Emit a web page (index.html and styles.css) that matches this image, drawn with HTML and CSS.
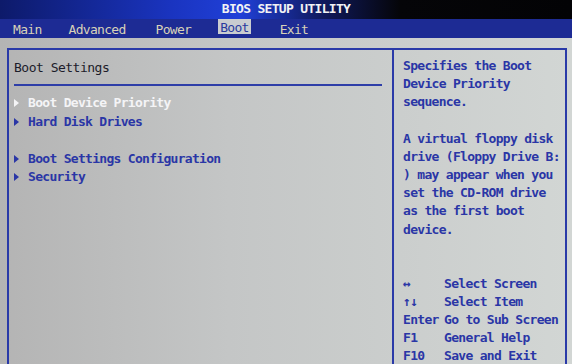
FILE: index.html
```html
<!DOCTYPE html>
<html>
<head>
<meta charset="utf-8">
<link rel="stylesheet" href="styles.css">
</head>
<body>
<div class="screen">
  <div class="titlebar">BIOS SETUP UTILITY</div>
  <nav class="menubar">
    <span class="tab tab-main">Main</span>
    <span class="tab tab-adv">Advanced</span>
    <span class="tab tab-power">Power</span>
    <span class="tab tab-boot active">Boot</span>
    <span class="tab tab-exit">Exit</span>
  </nav>
  <div class="body">
    <div class="frame">
      <section class="left">
        <div class="heading">Boot Settings</div>
        <div class="rule"></div>
        <ul class="items">
          <li class="item selected"><span class="tri"></span>Boot Device Priority</li>
          <li class="item"><span class="tri"></span>Hard Disk Drives</li>
          <li class="item spacer"></li>
          <li class="item"><span class="tri"></span>Boot Settings Configuration</li>
          <li class="item"><span class="tri"></span>Security</li>
        </ul>
      </section>
      <aside class="right">
        <div class="desc">
          <p>Specifies the Boot<br>Device Priority<br>sequence.</p>
          <p>A virtual floppy disk<br>drive (Floppy Drive B:<br>) may appear when you<br>set the CD-ROM drive<br>as the first boot<br>device.</p>
        </div>
        <div class="keys">
          <div class="krow"><span class="k">↔</span><span>Select Screen</span></div>
          <div class="krow"><span class="k">↑↓</span><span>Select Item</span></div>
          <div class="krow"><span class="k">Enter</span><span>Go to Sub Screen</span></div>
          <div class="krow"><span class="k">F1</span><span>General Help</span></div>
          <div class="krow"><span class="k">F10</span><span>Save and Exit</span></div>
        </div>
      </aside>
    </div>
  </div>
</div>
</body>
</html>
```
FILE: styles.css
```css
* { box-sizing: border-box; }
html, body {
  margin: 0;
  padding: 0;
  width: 572px;
  height: 364px;
  overflow: hidden;
  background: #0c0c10;
}
.screen {
  width: 572px;
  height: 364px;
  display: flex;
  flex-direction: column;
  font-family: "DejaVu Sans Mono", "Liberation Mono", monospace;
  font-size: 13px;
  font-weight: bold;
  letter-spacing: -0.7px;
  white-space: nowrap;
}
.titlebar {
  height: 19px;
  line-height: 18px;
  text-align: center;
  color: #f2f2f4;
  background: linear-gradient(90deg, #0d1a6a 0%, #1a34c0 30%, #2040d8 42%, #101a60 56%, #050508 70%, #030305 100%);
}
.menubar {
  height: 19px;
  background: #1d2b94;
  display: flex;
  align-items: flex-start;
  padding-left: 11px;
  color: #d8d2b8;
  font-weight: normal;
}
.tab {
  height: 19px;
  line-height: 22px;
  padding: 0 2px;
}
.tab-main { margin-right: 23px; }
.tab-adv { margin-right: 26px; }
.tab-power { margin-right: 25px; }
.tab-boot { margin-right: 27px; }
.tab.active {
  height: 15px;
  line-height: 17px;
  background: #c9ccd0;
  color: #2a3a9e;
}
.body {
  flex: 1;
  background: linear-gradient(90deg, #b4b4b4 0%, #c4c6c6 40%, #d2d6d4 100%);
  padding: 10px 5px 0 7px;
}
.frame {
  height: 316px;
  border: 2px solid #2a3aa8;
  border-bottom: none;
  display: flex;
  color: #2a36a6;
}
.left {
  width: 383px;
  padding: 9px 10px 0 5px;
}
.heading {
  line-height: 18px;
  color: #1c1c2a;
  font-weight: normal;
  letter-spacing: -0.5px;
}
.rule {
  height: 2px;
  background: #2e3ea8;
  margin-top: 7px;
  margin-bottom: 8px;
}
.items {
  list-style: none;
  margin: 0;
  padding: 0;
}
.item {
  height: 18.5px;
  line-height: 18px;
  display: flex;
  align-items: center;
}
.item.selected { color: #f4f4f6; }
.tri {
  display: inline-block;
  width: 0;
  height: 0;
  border-left: 5px solid currentColor;
  border-top: 4px solid transparent;
  border-bottom: 4px solid transparent;
  margin-right: 9px;
}
.right {
  flex: 1;
  border-left: 2px solid #2a3aa8;
  padding: 7px 0 0 9px;
  overflow: hidden;
}
.desc p {
  margin: 0 0 18px 0;
  line-height: 18.2px;
}
.keys {
  margin-top: 36px;
}
.krow {
  display: flex;
  line-height: 18px;
}
.k {
  width: 41px;
  flex: none;
}
```
